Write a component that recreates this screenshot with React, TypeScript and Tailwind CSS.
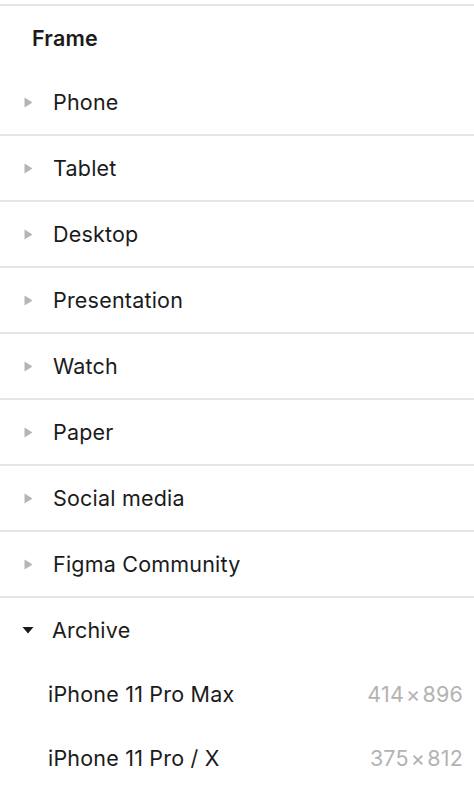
const groups = ["Phone", "Tablet", "Desktop", "Presentation", "Watch", "Paper", "Social media", "Figma Community"];

const archive = [
  { name: "iPhone 11 Pro Max", w: "414", h: "896" },
  { name: "iPhone 11 Pro / X", w: "375", h: "812" },
];

function Caret({ open }: { open?: boolean }) {
  if (open) {
    return (
      <svg width="12" height="8" viewBox="0 0 12 8" className="shrink-0">
        <path d="M0.5 1h11L6 7.5z" fill="#1b1b1b" />
      </svg>
    );
  }
  return (
    <svg width="9" height="11" viewBox="0 0 9 11" className="shrink-0">
      <path d="M0.5 0.5v10L8.5 5.5z" fill="#b5b5b5" />
    </svg>
  );
}

export default function App() {
  return (
    <div className="w-[474px] h-[790px] overflow-hidden bg-white pt-1 text-[#1b1b1b] tracking-[0.2px]" style={{ fontFamily: "Inter, 'Noto Sans', sans-serif" }}>
      <div className="border-t-2 border-[#e6e6e6]">
        <div className="h-16 flex items-center pl-8 text-[21.5px] font-semibold">Frame</div>
        {groups.map((g) => (
          <div key={g} className="h-[66px] border-b-2 border-[#e6e6e6] flex items-center pl-6">
            <Caret />
            <span className="ml-5 text-[21.5px]">{g}</span>
          </div>
        ))}
        <div className="h-16 flex items-center pl-[22px]">
          <Caret open />
          <span className="ml-[18px] text-[21.5px]">Archive</span>
        </div>
        {archive.map((a) => (
          <div key={a.name} className="h-16 flex items-center justify-between pl-12 pr-[11px]">
            <span className="text-[21.5px]">{a.name}</span>
            <span className="text-[21.5px] text-[#b3b3b3]">
              {a.w}
              <span className="mx-[2px]">×</span>
              {a.h}
            </span>
          </div>
        ))}
      </div>
    </div>
  );
}
